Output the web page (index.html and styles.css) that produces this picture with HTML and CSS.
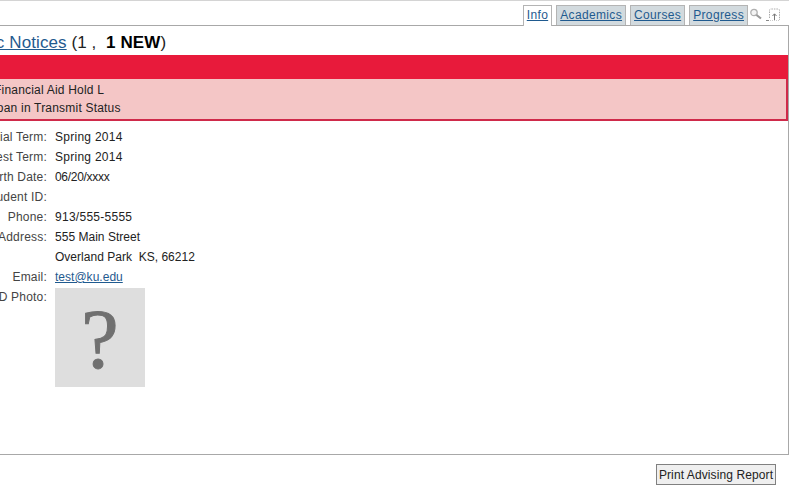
FILE: index.html
```html
<!DOCTYPE html>
<html lang="en">
<head>
<meta charset="utf-8">
<title>Academic Notices</title>
<link rel="stylesheet" href="styles.css">
</head>
<body>
<div class="page">
  <nav class="tabs">
    <a class="tab active" href="#">Info</a>
    <a class="tab" href="#">Academics</a>
    <a class="tab" href="#">Courses</a>
    <a class="tab" href="#">Progress</a>
    <svg class="icon-search" width="12" height="13" viewBox="0 0 12 13" aria-hidden="true">
      <circle cx="4" cy="4.500" r="3.200" fill="#f4f4f4" stroke="#b0b0b0" stroke-width="1.300"/>
      <path d="M6.500 7l4.500 3.500" stroke="#9a9a9a" stroke-width="2.200" fill="none"/>
    </svg>
    <svg class="icon-top" width="15" height="14" viewBox="0 0 15 14" aria-hidden="true">
      <path d="M3.500 10V2.500q0-1.500 1.500-1.500h7q1.500 0 1.500 1.500V12" fill="none" stroke="#aaa" stroke-dasharray="1.500 1"/>
      <path d="M4 12.500h9" stroke="#ccc" stroke-dasharray="1 1"/>
      <path d="M0 12.500h3" stroke="#888"/>
      <path d="M8.500 12V6M6.500 8l2-2.200 2 2.200" fill="none" stroke="#777"/>
    </svg>
  </nav>
  <main class="panel">
    <h1 class="title"><a href="#">Academic Notices</a> (1 ,&nbsp; <b>1 NEW</b>)</h1>
    <section class="notice">
      <div class="notice-head"></div>
      <div class="notice-body">
        <div class="notice-first">Financial Aid Hold L</div>
        <div>Loan in Transmit Status</div>
      </div>
    </section>
    <dl class="info">
      <dt>Initial Term:</dt><dd class="wide">Spring 2014</dd>
      <dt>Latest Term:</dt><dd class="wide">Spring 2014</dd>
      <dt>Birth Date:</dt><dd class="tight">06/20/xxxx</dd>
      <dt>Student ID:</dt><dd></dd>
      <dt>Phone:</dt><dd class="wide">913/555-5555</dd>
      <dt>Address:</dt><dd>555 Main Street</dd>
      <dt></dt><dd>Overland Park&nbsp; KS, 66212</dd>
      <dt>Email:</dt><dd><a href="#">test@ku.edu</a></dd>
      <dt>KU ID Photo:</dt><dd class="photo-cell"><div class="photo">?</div></dd>
    </dl>
  </main>
  <div class="actions"><button class="print" type="button">Print Advising Report</button></div>
</div>
</body>
</html>
```
FILE: styles.css
```css
html, body {
  margin: 0;
  height: 100%;
  overflow: hidden;
  background: #fff;
}
body {
  font-family: "Liberation Sans", Arial, sans-serif;
  font-size: 12px;
  color: #222;
}
a { color: #1f5a8f; }
.page {
  width: 789px;
  border-top: 1px solid #d4d4d4;
}
.tabs {
  height: 24px;
  display: flex;
  justify-content: flex-end;
  align-items: flex-end;
  padding-right: 8px;
  gap: 4px;
}
.tab {
  height: 20px;
  box-sizing: border-box;
  padding: 2px 3px 0;
  border: 1px solid #b4b4b4;
  border-bottom: 0;
  background: #d2dade;
  line-height: 15px;
  letter-spacing: .35px;
  white-space: nowrap;
}
.tab.active {
  background: #fff;
  height: 21px;
  margin-bottom: -1px;
  position: relative;
  z-index: 1;
}
.icon-search {
  margin: 0 0 4px -2px;
}
.icon-top {
  margin: 0 0 3px 0;
}
.panel {
  height: 430px;
  margin-left: -60px;
  box-sizing: border-box;
  border: 1px solid #a8a8a8;
  border-left: 0;
}
.title {
  margin: 0;
  height: 29px;
  font-size: 17px;
  font-weight: normal;
  line-height: 33px;
  letter-spacing: .1px;
  color: #222;
  text-indent: -11px;
  white-space: nowrap;
}
.title b { color: #000; }
.notice-head {
  height: 24px;
  background: #e81a3b;
}
.notice-body {
  height: 42px;
  box-sizing: border-box;
  padding: 2px 0 0 50px;
  background: #f4c6c6;
  border-right: 2px solid #cf2a4a;
  border-bottom: 2px solid #cf2a4a;
  line-height: 18px;
  letter-spacing: .2px;
  color: #222;
}
.notice-first { padding-left: 4px; }
.info {
  display: grid;
  grid-template-columns: 107px 1fr;
  column-gap: 8px;
  grid-auto-rows: 20px;
  margin: 6px 0 0;
  line-height: 20px;
}
.info dt {
  text-align: right;
  letter-spacing: .2px;
  color: #444;
}
.info dd {
  margin: 0;
  letter-spacing: .02px;
  color: #222;
}
.info dd.wide { letter-spacing: .27px; }
.info dd.tight { letter-spacing: -.3px; }
.photo-cell { height: 99px; }
.photo {
  width: 90px;
  height: 99px;
  margin-top: 1px;
  background: #dedede;
  color: #707070;
  font-family: "Liberation Serif", serif;
  font-size: 84px;
  line-height: 103px;
  -webkit-text-stroke: 1px #707070;
  text-align: center;
}
.actions {
  display: flex;
  justify-content: flex-end;
  padding: 9px 13px 0 0;
}
.print {
  width: 120px;
  height: 21px;
  padding: 0;
  box-sizing: border-box;
  border: 1px solid #808080;
  background: #efefef;
  font: 12px "Liberation Sans", Arial, sans-serif;
  letter-spacing: .1px;
  color: #222;
}
```
